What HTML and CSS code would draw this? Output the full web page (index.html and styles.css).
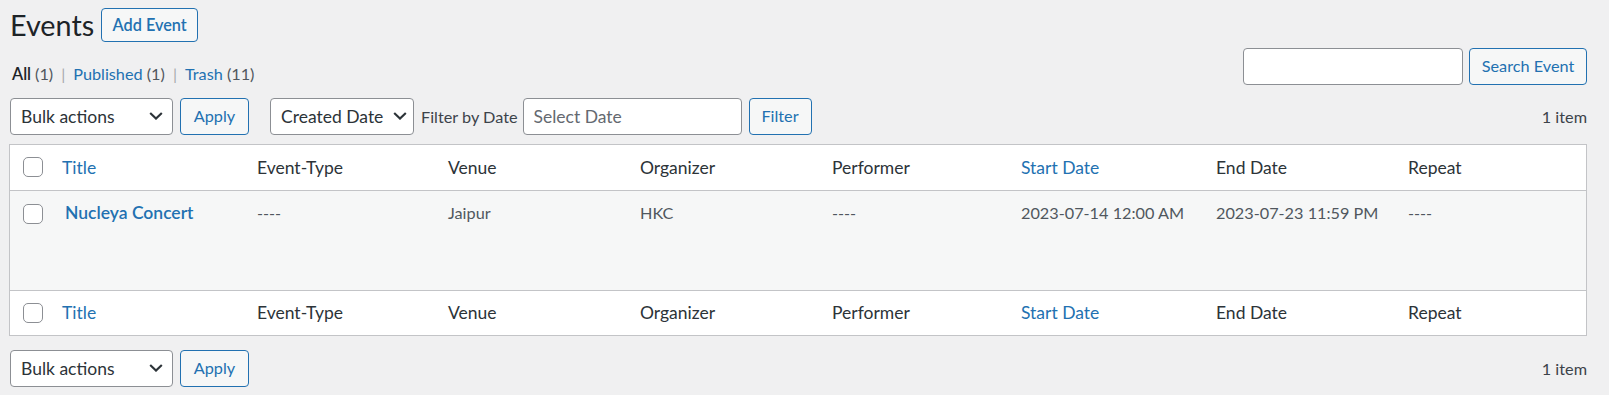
FILE: index.html
```html
<!DOCTYPE html>
<html lang="en">
<head>
<meta charset="utf-8">
<title>Events</title>
<link rel="stylesheet" href="styles.css">
</head>
<body>
<div class="wrap">
  <div class="page-head">
    <h1 class="page-title">Events</h1>
    <a class="btn btn-title" href="#">Add Event</a>
  </div>

  <div class="subrow">
    <ul class="subsubsub">
      <li><a class="current" href="#">All <span class="count">(1)</span></a><span class="sep">|</span></li>
      <li><a href="#">Published <span class="count">(1)</span></a><span class="sep">|</span></li>
      <li><a href="#">Trash <span class="count">(11)</span></a></li>
    </ul>
    <div class="search-box">
      <input class="field search-input" type="search">
      <button class="btn btn-search" type="button">Search Event</button>
    </div>
  </div>

  <div class="tablenav">
    <div class="select select-bulk"><span>Bulk actions</span><svg class="chev" width="14" height="8" viewBox="0 0 14 8"><polyline points="1.2,1 7,6.6 12.8,1" fill="none" stroke="#2c3338" stroke-width="2.1"/></svg></div>
    <button class="btn btn-apply" type="button">Apply</button>
    <div class="select select-date"><span>Created Date</span><svg class="chev" width="14" height="8" viewBox="0 0 14 8"><polyline points="1.2,1 7,6.6 12.8,1" fill="none" stroke="#2c3338" stroke-width="2.1"/></svg></div>
    <label class="filter-label">Filter by Date</label>
    <input class="field date-input" type="text" placeholder="Select Date">
    <button class="btn btn-filter" type="button">Filter</button>
    <div class="displaying-num">1 item</div>
  </div>

  <table class="list-table">
    <colgroup>
      <col class="c-check">
      <col class="c-title">
      <col class="c-type">
      <col class="c-venue">
      <col class="c-org">
      <col class="c-perf">
      <col class="c-start">
      <col class="c-end">
      <col class="c-repeat">
    </colgroup>
    <thead>
      <tr>
        <th class="check-col"><span class="cb"></span></th>
        <th><a href="#">Title</a></th>
        <th>Event-Type</th>
        <th>Venue</th>
        <th>Organizer</th>
        <th>Performer</th>
        <th><a href="#">Start Date</a></th>
        <th>End Date</th>
        <th>Repeat</th>
      </tr>
    </thead>
    <tbody>
      <tr>
        <td class="check-col"><span class="cb"></span></td>
        <td><a class="row-title" href="#">Nucleya Concert</a></td>
        <td>----</td>
        <td>Jaipur</td>
        <td>HKC</td>
        <td>----</td>
        <td class="date-cell">2023-07-14 12:00 AM</td>
        <td>2023-07-23 11:59 PM</td>
        <td>----</td>
      </tr>
    </tbody>
    <tfoot>
      <tr>
        <th class="check-col"><span class="cb"></span></th>
        <th><a href="#">Title</a></th>
        <th>Event-Type</th>
        <th>Venue</th>
        <th>Organizer</th>
        <th>Performer</th>
        <th><a href="#">Start Date</a></th>
        <th>End Date</th>
        <th>Repeat</th>
      </tr>
    </tfoot>
  </table>

  <div class="tablenav tablenav-bottom">
    <div class="select select-bulk"><span>Bulk actions</span><svg class="chev" width="14" height="8" viewBox="0 0 14 8"><polyline points="1.2,1 7,6.6 12.8,1" fill="none" stroke="#2c3338" stroke-width="2.1"/></svg></div>
    <button class="btn btn-apply" type="button">Apply</button>
    <div class="displaying-num">1 item</div>
  </div>
</div>
</body>
</html>
```

FILE: styles.css
```css
* { box-sizing: border-box; }

html, body {
  margin: 0;
  background: #f0f0f1;
}

body {
  font-family: Lato, "Segoe UI", "Liberation Sans", sans-serif;
  font-size: 16.25px;
  color: #3c434a;
}

a { color: #2271b1; text-decoration: none; }

.wrap {
  padding: 8px 22px 0 9px;
}

/* heading */
.page-head {
  display: flex;
  align-items: center;
  gap: 7px;
  height: 34px;
}

.page-title {
  margin: 0;
  padding-left: 1px;
  font-size: 28.75px;
  font-weight: 400;
  line-height: 34px;
  color: #1d2327;
}

.btn {
  display: inline-flex;
  align-items: center;
  justify-content: center;
  height: 37px;
  padding: 0 10px;
  border: 1px solid #2271b1;
  border-radius: 4px;
  background: #f6f7f7;
  color: #2271b1;
  font-family: inherit;
  font-size: 16.25px;
  line-height: 1;
}

.btn-title {
  width: 97px;
  height: 34px;
  font-weight: 600;
}

/* sub nav + search */
.subrow {
  display: flex;
  justify-content: space-between;
  align-items: flex-start;
  margin-top: 6px;
}

.subsubsub {
  display: flex;
  margin: 15px 0 0;
  padding: 0 0 0 3px;
  list-style: none;
  line-height: 22.75px;
  font-size: 16.25px;
}

.subsubsub .current {
  color: #1d2327;
  font-weight: 600;
}

.subsubsub .count {
  color: #50575e;
  font-weight: 400;
}

.subsubsub .sep {
  margin: 0 8px;
  color: #a7aaad;
}

.search-box {
  display: flex;
  gap: 6px;
}

.field {
  height: 37px;
  border: 1px solid #8c8f94;
  border-radius: 4px;
  background: #fff;
  font-family: inherit;
  font-size: 17.5px;
  color: #2c3338;
  padding: 0 10px;
}

.field::placeholder { color: #646970; }

.search-input { width: 220px; }
.btn-search { width: 118px; }

/* table nav */
.tablenav {
  display: flex;
  align-items: center;
  height: 37px;
  margin-top: 12px;
  padding-left: 1px;
}

.tablenav-bottom { margin-top: 14px; }

.select {
  display: flex;
  align-items: center;
  justify-content: space-between;
  height: 37px;
  padding: 0 9px 0 10px;
  border: 1px solid #8c8f94;
  border-radius: 4px;
  background: #fff;
  font-size: 17.5px;
  color: #2c3338;
}

.select-bulk { width: 163px; }
.select-date { width: 144px; margin-left: 21px; padding-right: 6px; }

.chev { display: block; flex: none; }

.btn-apply { width: 69px; margin-left: 7px; }

.filter-label {
  margin: 0 5px 0 7px;
  font-size: 16.25px;
  color: #3c434a;
}

.date-input { width: 219px; }

.btn-filter { width: 63px; margin-left: 7px; }

.displaying-num {
  margin-left: auto;
  font-size: 16.25px;
  color: #3c434a;
}

/* table */
.list-table {
  width: 100%;
  table-layout: fixed;
  border-collapse: separate;
  border-spacing: 0;
  border: 1px solid #c3c4c7;
  margin-top: 9px;
  background: #fff;
}

.c-check { width: 40px; }
.c-title { width: 195px; }
.c-type { width: 191px; }
.c-venue { width: 192px; }
.c-org { width: 192px; }
.c-perf { width: 189px; }
.c-start { width: 195px; }
.c-end { width: 192px; }

.list-table th {
  height: 46px;
  padding: 0 12px;
  text-align: left;
  font-weight: 400;
  font-size: 17.5px;
  color: #2c3338;
  vertical-align: middle;
}

.list-table thead th { border-bottom: 1px solid #c3c4c7; }
.list-table tfoot th { border-top: 1px solid #c3c4c7; height: 45px; }

.list-table td {
  height: 99px;
  padding: 10px 12px 0;
  vertical-align: top;
  background: #f6f7f7;
  font-size: 16.25px;
  line-height: 24px;
  color: #50575e;
}

.list-table .check-col {
  padding: 0 0 0 13px;
}

.list-table td.check-col { padding-top: 13px; }

.cb {
  display: block;
  width: 20px;
  height: 20px;
  border: 1px solid #8c8f94;
  border-radius: 5px;
  background: #fff;
}

.row-title {
  display: inline-block;
  padding-left: 3px;
  font-size: 17.5px;
  font-weight: 600;
  color: #2271b1;
}

.date-cell { padding-left: 14px; }
```
